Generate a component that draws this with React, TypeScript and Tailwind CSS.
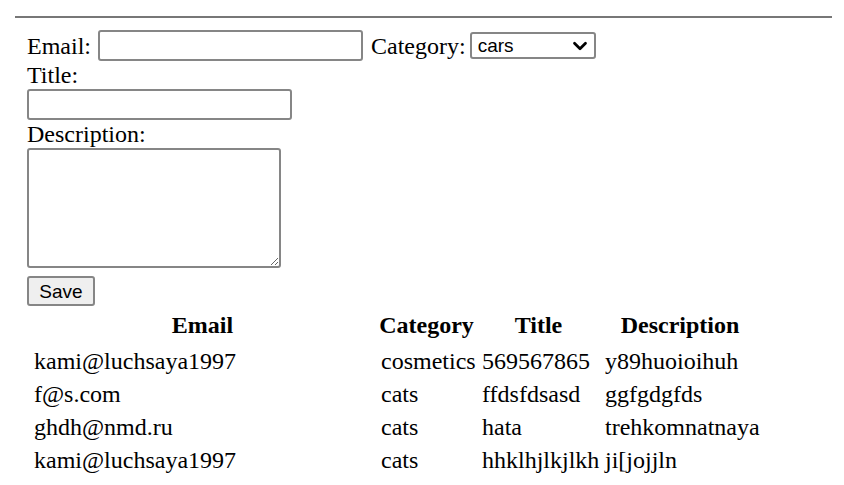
import React, { useState } from 'react';
import { ChevronDown } from 'lucide-react';

type Ad = { email: string; category: string; title: string; description: string };

const ads: Ad[] = [
  { email: 'kami@luchsaya1997', category: 'cosmetics', title: '569567865', description: 'y89huoioihuh' },
  { email: 'f@s.com', category: 'cats', title: 'ffdsfdsasd', description: 'ggfgdgfds' },
  { email: 'ghdh@nmd.ru', category: 'cats', title: 'hata', description: 'trehkomnatnaya' },
  { email: 'kami@luchsaya1997', category: 'cats', title: 'hhklhjlkjlkh', description: 'ji[jojjln' },
];

const fieldClass = 'border-2 border-[#868686] rounded-[3px] bg-white outline-none';

const App: React.FC = () => {
  const [category, setCategory] = useState('cars');

  return (
    <div className="w-[844px] h-[485px] bg-white text-black font-['Liberation_Serif',serif] text-[24px] overflow-hidden">
      <div className="pt-[16px] pl-[15px] pr-[12px]">
        <div className="border-t-2 border-[#777777]" />
      </div>

      {/* Форма */}
      <form className="pl-[27px] mt-[11px]" onSubmit={(e) => e.preventDefault()}>
        <div className="flex items-center h-[33px]">
          <span>Email:</span>
          <input type="text" className={`${fieldClass} ml-[7px] w-[265px] h-[31px]`} />
          <span className="ml-[8px]">Category:</span>
          <div className="relative flex ml-[4px]">
            <select
              value={category}
              onChange={(e) => setCategory(e.target.value)}
              className={`${fieldClass} appearance-none w-[126px] h-[27px] pl-[6px] font-['Liberation_Sans',sans-serif] text-[19px] leading-none`}
            >
              <option value="cars">cars</option>
              <option value="cats">cats</option>
              <option value="cosmetics">cosmetics</option>
            </select>
            <ChevronDown
              className="absolute right-[5px] top-1/2 -translate-y-1/2 pointer-events-none"
              size={22}
              strokeWidth={3}
            />
          </div>
        </div>
        <div className="h-[27px] leading-[27px]">Title:</div>
        <input type="text" className={`${fieldClass} block w-[265px] h-[31px]`} />
        <div className="h-[28px] leading-[28px]">Description:</div>
        <textarea className={`${fieldClass} block w-[254px] h-[120px]`} />
        <button
          type="submit"
          className="block mt-[8px] w-[68px] h-[30px] border-2 border-[#868686] rounded-[3px] bg-[#efefef] font-['Liberation_Sans',sans-serif] text-[19px] leading-none"
        >
          Save
        </button>
      </form>

      {/* Таблица */}
      <div className="ml-[29px] mt-[2px] grid grid-cols-[347px_101px_123px_160px]">
        {['Email', 'Category', 'Title', 'Description'].map((h) => (
          <div key={h} className="h-[33px] flex items-center justify-center font-bold">
            {h}
          </div>
        ))}
        {ads.map((ad, i) =>
          [ad.email, ad.category, ad.title, ad.description].map((v, j) => (
            <div
              key={`${i}-${j}`}
              className={`h-[33px] flex items-center pl-[5px] whitespace-nowrap ${i === 0 ? 'mt-[3px]' : ''}`}
            >
              {v}
            </div>
          ))
        )}
      </div>
    </div>
  );
};

export default App;
